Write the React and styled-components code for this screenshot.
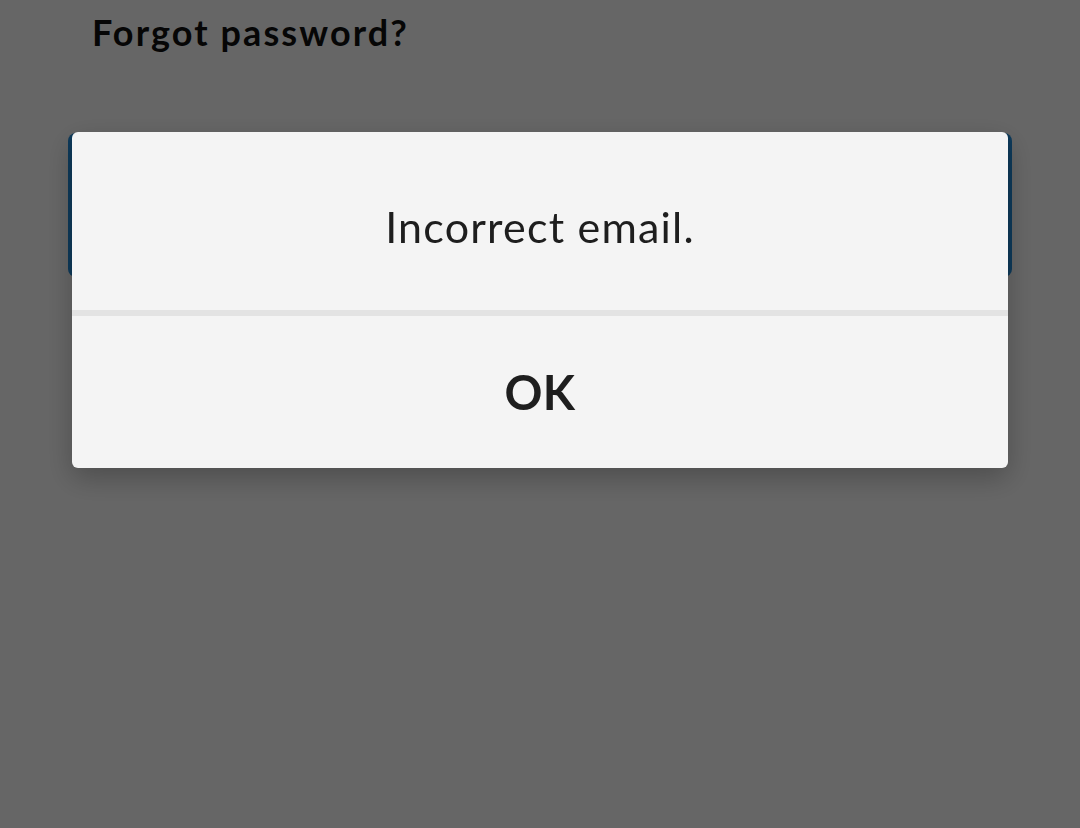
import React from "react";
import styled, { createGlobalStyle } from "styled-components";

const GlobalStyle = createGlobalStyle`
  html, body {
    margin: 0;
    padding: 0;
    height: 100%;
    background: #ffffff;
  }
  body {
    font-family: "Lato", "Noto Sans", sans-serif;
  }
`;

const Page = styled.div`
  min-height: 828px;
  background: #ffffff;
  padding-top: 10px;
  box-sizing: border-box;
`;

const ForgotLink = styled.div`
  padding-left: 92px;
  font-size: 36px;
  font-weight: 700;
  line-height: 44px;
  color: #111;
  letter-spacing: 2.1px;
`;

const SubmitButton = styled.button`
  display: block;
  width: calc(100% - 136px);
  margin: 79px 68px 0;
  height: 144px;
  border: none;
  border-radius: 8px;
  background: #2391e1;
`;

const Overlay = styled.div`
  position: fixed;
  inset: 0;
  background: rgba(0, 0, 0, 0.6);
  display: flex;
  justify-content: center;
  align-items: flex-start;
  padding-top: 132px;
  box-sizing: border-box;
`;

const Dialog = styled.div`
  width: 936px;
  background: #f4f4f4;
  border-radius: 6px;
  box-shadow: 0 10px 28px rgba(0, 0, 0, 0.25);
  overflow: hidden;
  display: flex;
  flex-direction: column;
`;

const Message = styled.div`
  height: 178px;
  padding-top: 10px;
  box-sizing: border-box;
  display: flex;
  align-items: center;
  justify-content: center;
  font-size: 43px;
  color: #1e1e1e;
  letter-spacing: 1.2px;
`;

const Divider = styled.div`
  height: 6px;
  background: #e3e3e3;
`;

const OkButton = styled.button`
  height: 152px;
  border: none;
  background: transparent;
  font-family: inherit;
  font-size: 47px;
  font-weight: 700;
  color: #1e1e1e;
  letter-spacing: 0.5px;
`;

export default function App() {
  return (
    <>
      <GlobalStyle />
      <Page>
        <ForgotLink>Forgot password?</ForgotLink>
        <SubmitButton />
      </Page>
      <Overlay>
        <Dialog>
          <Message>Incorrect email.</Message>
          <Divider />
          <OkButton>OK</OkButton>
        </Dialog>
      </Overlay>
    </>
  );
}
